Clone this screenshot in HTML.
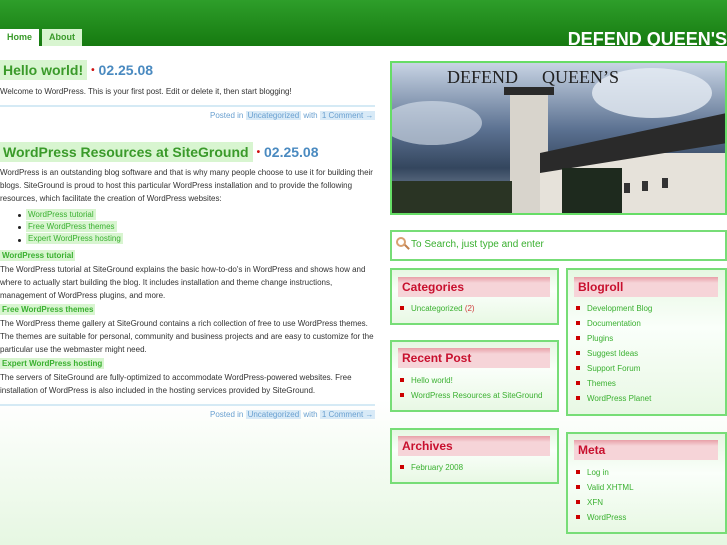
<!DOCTYPE html>
<html><head><meta charset="utf-8"><style>
*{margin:0;padding:0;box-sizing:border-box}
body{width:727px;height:545px;overflow:hidden;position:relative;font-family:"Liberation Sans",sans-serif;background:linear-gradient(#fff 0,#fff 400px,#e6f7e2 545px)}
.a{position:absolute;white-space:nowrap}
#hdr{left:0;top:0;width:727px;height:46px;background:linear-gradient(#2e9e2a,#167a10)}
.tab{top:29px;height:17px;font-size:9px;font-weight:bold;color:#3a9a2a;text-align:center;line-height:17px}
.p{font-size:8px;color:#333;line-height:13px;left:0}
.t{left:0;line-height:20px}
.h{font-size:14px;font-weight:bold;color:#3a9a2a;background:#d8f5d0;padding:0 4px 0 3px;display:inline-block}
.d{font-size:14px;font-weight:bold;color:#4a8ac0;margin-left:4px}
.d b{color:#d01010;font-size:10px;vertical-align:2px}
.sh{font-size:8px;font-weight:bold;color:#3ab030;background:#d8f5d0;padding:0 2px;line-height:11px;left:0}
.li{font-size:8px;color:#3ab030;background:#d8f5d0;padding:0 2px;line-height:11px;left:28px}
.dot{width:3px;height:3px;background:#222;border-radius:50%;left:18px}
.hr{left:0;width:375px;height:2px;background:#d5eaf5}
.post{font-size:8px;color:#6aa0d0;line-height:12px}
.post span{background:#d8eaf7;padding:0 2px}
.box{border:2px solid #77dd77;background:linear-gradient(#e6f7e2,#fafffa 40%,#e8f8e4)}
.wh{background:linear-gradient(#e8a0a8 0,#f6d4d8 6px,#f6d4d8);color:#c8102e;font-size:12px;font-weight:bold;padding-left:4px;line-height:20px}
.wl{font-size:8px;color:#3ab030;line-height:15px}
.wl i{display:inline-block;width:4px;height:4px;background:#cc0000;margin-right:7px;vertical-align:1px}
</style></head><body>
<div class="a" id="hdr"></div>
<div class="a tab" style="left:0;width:39px;background:#fff">Home</div>
<div class="a tab" style="left:42px;width:40px;background:#d8f5d0">About</div>
<div class="a" style="right:0;top:29px;font-size:18px;font-weight:bold;color:#fff;line-height:20px">DEFEND QUEEN'S</div>

<div class="a t" style="top:60px"><span class="h">Hello world!</span><span class="d"><b>•</b> 02.25.08</span></div>
<div class="a p" style="top:85px">Welcome to WordPress. This is your first post. Edit or delete it, then start blogging!</div>
<div class="a hr" style="top:105px"></div>
<div class="a post" style="left:210px;top:110px">Posted in <span>Uncategorized</span> with <span>1 Comment →</span></div>

<div class="a t" style="top:142px"><span class="h">WordPress Resources at SiteGround</span><span class="d"><b>•</b> 02.25.08</span></div>
<div class="a p" style="top:166px">WordPress is an outstanding blog software and that is why many people choose to use it for building their<br>blogs. SiteGround is proud to host this particular WordPress installation and to provide the following<br>resources, which facilitate the creation of WordPress websites:</div>
<div class="a dot" style="top:214px"></div><div class="a li" style="left:26px;top:209px">WordPress tutorial</div>
<div class="a dot" style="top:226px"></div><div class="a li" style="left:26px;top:221px">Free WordPress themes</div>
<div class="a dot" style="top:239px"></div><div class="a li" style="left:26px;top:233px">Expert WordPress hosting</div>
<div class="a sh" style="top:250px">WordPress tutorial</div>
<div class="a p" style="top:263px">The WordPress tutorial at SiteGround explains the basic how-to-do's in WordPress and shows how and<br>where to actually start building the blog. It includes installation and theme change instructions,<br>management of WordPress plugins, and more.</div>
<div class="a sh" style="top:304px">Free WordPress themes</div>
<div class="a p" style="top:317px">The WordPress theme gallery at SiteGround contains a rich collection of free to use WordPress themes.<br>The themes are suitable for personal, community and business projects and are easy to customize for the<br>particular use the webmaster might need.</div>
<div class="a sh" style="top:358px">Expert WordPress hosting</div>
<div class="a p" style="top:371px">The servers of SiteGround are fully-optimized to accommodate WordPress-powered websites. Free<br>installation of WordPress is also included in the hosting services provided by SiteGround.</div>
<div class="a hr" style="top:404px"></div>
<div class="a post" style="left:210px;top:409px">Posted in <span>Uncategorized</span> with <span>1 Comment →</span></div>

<div class="a" style="left:390px;top:61px;width:337px;height:154px;border:2px solid #66dd66;overflow:hidden;background:linear-gradient(#c8d4e4,#5a7090 45%,#34465e 70%,#9aa8b8)">
<svg width="335" height="152" style="position:absolute;left:0;top:0">
<ellipse cx="260" cy="30" rx="60" ry="25" fill="#e6ecf4" opacity=".8"/>
<ellipse cx="40" cy="60" rx="50" ry="22" fill="#dce4ee" opacity=".6"/>
<rect x="118" y="28" width="38" height="124" fill="#d8d4cc"/>
<rect x="112" y="24" width="50" height="8" fill="#2a2a2a"/>
<rect x="148" y="90" width="190" height="62" fill="#e6e2da"/>
<polygon points="148,90 335,50 335,80 148,110" fill="#2a2a2a"/>
<rect x="170" y="105" width="60" height="47" fill="#1e2a1e"/>
<rect x="0" y="118" width="120" height="34" fill="#2a3424"/>
<rect x="232" y="120" width="6" height="10" fill="#333"/><rect x="250" y="118" width="6" height="10" fill="#333"/><rect x="270" y="115" width="6" height="10" fill="#333"/>
<text x="55" y="20" font-family="Liberation Serif" font-size="18" fill="#222">DEFEND</text>
<text x="150" y="20" font-family="Liberation Serif" font-size="18" fill="#222">QUEEN’S</text>
</svg></div>

<div class="a" style="left:390px;top:230px;width:337px;height:31px;border:2px solid #77dd77;background:#fff"></div>
<div class="a" style="left:396px;top:237px;width:10px;height:10px;border:2px solid #d9a070;border-radius:50%"></div>
<div class="a" style="left:404px;top:246px;width:6px;height:2px;background:#c08050;transform:rotate(45deg)"></div>
<div class="a" style="left:411px;top:239px;font-size:10px;color:#3ab030">To Search, just type and enter</div>

<div class="a box" style="left:390px;top:268px;width:169px;height:57px"></div>
<div class="a wh" style="left:398px;top:277px;width:152px">Categories</div>
<div class="a wl" style="left:400px;top:301px"><i></i>Uncategorized <span style="color:#d04040">(2)</span></div>

<div class="a box" style="left:390px;top:340px;width:169px;height:72px"></div>
<div class="a wh" style="left:398px;top:348px;width:152px">Recent Post</div>
<div class="a wl" style="left:400px;top:373px"><i></i>Hello world!<br><i></i>WordPress Resources at SiteGround</div>

<div class="a box" style="left:390px;top:428px;width:169px;height:56px"></div>
<div class="a wh" style="left:398px;top:436px;width:152px">Archives</div>
<div class="a wl" style="left:400px;top:460px"><i></i>February 2008</div>

<div class="a box" style="left:566px;top:268px;width:161px;height:148px"></div>
<div class="a wh" style="left:574px;top:277px;width:144px">Blogroll</div>
<div class="a wl" style="left:576px;top:301px"><i></i>Development Blog<br><i></i>Documentation<br><i></i>Plugins<br><i></i>Suggest Ideas<br><i></i>Support Forum<br><i></i>Themes<br><i></i>WordPress Planet</div>

<div class="a box" style="left:566px;top:432px;width:161px;height:102px"></div>
<div class="a wh" style="left:574px;top:440px;width:144px">Meta</div>
<div class="a wl" style="left:576px;top:465px"><i></i>Log in<br><i></i>Valid XHTML<br><i></i>XFN<br><i></i>WordPress</div>
</body></html>
